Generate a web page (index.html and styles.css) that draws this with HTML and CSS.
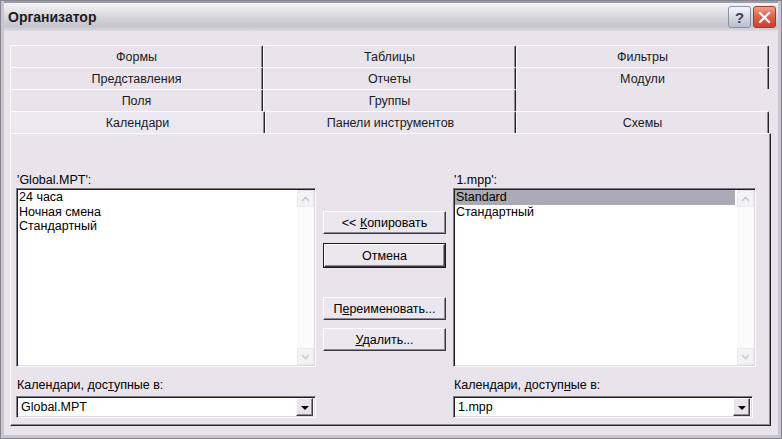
FILE: index.html
```html
<!DOCTYPE html>
<html lang="ru">
<head>
    <meta charset="UTF-8">
    <title>Организатор</title>
    <link rel="stylesheet" href="styles.css">
</head>
<body>
    <div class="window">
        <div class="titlebar">
            <span class="title">Организатор</span>
            <div class="caption-buttons">
                <span class="cap-btn help">?</span>
                <span class="cap-btn close">
                    <svg width="13" height="13" viewBox="0 0 13 13"><path d="M2 2 L11 11 M11 2 L2 11" stroke="#fff" stroke-width="2.2" stroke-linecap="round"/></svg>
                </span>
            </div>
        </div>

        <div class="client">
            <!-- Tab strip: four rows, the front row sits on the panel -->
            <div class="tabs">
                <div class="tab-row">
                    <div class="tab">Формы</div>
                    <div class="tab">Таблицы</div>
                    <div class="tab">Фильтры</div>
                </div>
                <div class="tab-row">
                    <div class="tab">Представления</div>
                    <div class="tab">Отчеты</div>
                    <div class="tab">Модули</div>
                </div>
                <div class="tab-row">
                    <div class="tab">Поля</div>
                    <div class="tab">Группы</div>
                    <div class="tab-empty"></div>
                </div>
                <div class="tab-row front">
                    <div class="tab selected">Календари</div>
                    <div class="tab">Панели инструментов</div>
                    <div class="tab">Схемы</div>
                </div>
            </div>

            <div class="panel">
                <div class="column">
                    <div class="caption">'Global.MPT':</div>
                    <div class="listbox">
                        <div class="items">
                            <div class="item">24 часа</div>
                            <div class="item">Ночная смена</div>
                            <div class="item">Стандартный</div>
                        </div>
                        <div class="scrollbar">
                            <span class="arrow"><svg width="9" height="6" viewBox="0 0 9 6"><path d="M1 5 L4.5 1.5 L8 5" fill="none" stroke="#c9c6cf" stroke-width="1.4"/></svg></span>
                            <span class="arrow"><svg width="9" height="6" viewBox="0 0 9 6"><path d="M1 1 L4.5 4.5 L8 1" fill="none" stroke="#c9c6cf" stroke-width="1.4"/></svg></span>
                        </div>
                    </div>
                    <div class="caption bottom-caption">Календари, дос<u>т</u>упные в:</div>
                    <div class="combo">
                        <span class="combo-text">Global.MPT</span>
                        <span class="drop"><span class="triangle"></span></span>
                    </div>
                </div>

                <div class="actions">
                    <button class="btn copy">&lt;&lt; <u>К</u>опировать</button>
                    <button class="btn default">Отмена</button>
                    <button class="btn rename">П<u>е</u>реименовать...</button>
                    <button class="btn delete"><u>У</u>далить...</button>
                </div>

                <div class="column">
                    <div class="caption">'1.mpp':</div>
                    <div class="listbox">
                        <div class="items">
                            <div class="item active">Standard</div>
                            <div class="item">Стандартный</div>
                        </div>
                        <div class="scrollbar">
                            <span class="arrow"><svg width="9" height="6" viewBox="0 0 9 6"><path d="M1 5 L4.5 1.5 L8 5" fill="none" stroke="#c9c6cf" stroke-width="1.4"/></svg></span>
                            <span class="arrow"><svg width="9" height="6" viewBox="0 0 9 6"><path d="M1 1 L4.5 4.5 L8 1" fill="none" stroke="#c9c6cf" stroke-width="1.4"/></svg></span>
                        </div>
                    </div>
                    <div class="caption bottom-caption">Календари, доступ<u>н</u>ые в:</div>
                    <div class="combo narrow">
                        <span class="combo-text">1.mpp</span>
                        <span class="drop"><span class="triangle"></span></span>
                    </div>
                </div>
            </div>
        </div>
    </div>
</body>
</html>
```

FILE: styles.css
```css
* {
    box-sizing: border-box;
}

body {
    margin: 0;
    background: #ffffff;
    font-family: "Liberation Sans", Arial, sans-serif;
    font-size: 12.5px;
    color: #000000;
}

/* Outer window frame */
.window {
    width: 782px;
    height: 439px;
    border: 1px solid #86848f;
    padding: 0 3px 3px 3px;
    background: #c9c6d0;
    display: flex;
    flex-direction: column;
}

/* Title bar */
.titlebar {
    height: 30px;
    display: flex;
    align-items: center;
    justify-content: space-between;
    padding: 0 2px 0 4px;
    border-top: 2px solid #9e9ca8;
    background: linear-gradient(to bottom, #f3f3f6 0%, #e6e5ea 25%, #cfcdd5 65%, #c6c4cc 85%, #dedce2 100%);
}

.title {
    font-size: 14px;
    font-weight: bold;
    color: #1c1b20;
}

.caption-buttons {
    display: flex;
    gap: 2px;
}

.cap-btn {
    width: 23px;
    height: 22px;
    border-radius: 3px;
    display: flex;
    align-items: center;
    justify-content: center;
}

.help {
    border: 1px solid #8a90a6;
    background: linear-gradient(to bottom, #f4f5fa 0%, #d6d9e4 55%, #b9bdcc 100%);
    color: #3b4266;
    font-weight: bold;
    font-size: 15px;
}

.close {
    border: 1px solid #a83a2c;
    background: linear-gradient(to bottom, #f0a08c 0%, #e0644e 45%, #c8412f 100%);
}

/* Client area */
.client {
    flex: 1;
    background: #e9e4ec;
    padding: 14px 7px 0 6px;
}

.tabs {
    margin-right: 2px;
}

.tab-row {
    display: grid;
    grid-template-columns: 253px 253px 253px;
    height: 22px;
}

.tab-row.front {
    grid-template-columns: 255px 251px 253px;
}

.tab {
    display: flex;
    align-items: center;
    justify-content: center;
    border-top: 1px solid #ffffff;
    border-left: 1px solid #ffffff;
    border-right: 1px solid #242328;
    box-shadow: inset -1px 0 #8d8a95;
    border-radius: 2px 2px 0 0;
    color: #1a1a1e;
}

.tab.selected {
    background: #ece8ef;
}

/* Tab page */
.panel {
    height: 293px;
    border-top: 1px solid #ffffff;
    border-left: 1px solid #ffffff;
    border-right: 1px solid #242328;
    border-bottom: 1px solid #242328;
    box-shadow: inset -1px -1px #8d8a95;
    padding: 39px 0 0 5px;
    display: grid;
    grid-template-columns: 300px 123px 303px;
    column-gap: 7px;
    align-items: start;
}

.column {
    display: flex;
    flex-direction: column;
}

.caption {
    height: 15px;
    line-height: 15px;
    padding-left: 1px;
}

.bottom-caption {
    margin-top: 11px;
    margin-bottom: 3px;
}

/* List boxes */
.listbox {
    height: 179px;
    display: flex;
    background: #ffffff;
    border: 1px solid;
    border-color: #7d7a86 #ffffff #ffffff #7d7a86;
    box-shadow: inset 1px 1px #1f1e22, inset -1px -1px #dcd8e0;
    padding: 1px;
}

.items {
    flex: 1;
    padding-right: 2px;
}

.item {
    height: 14.5px;
    line-height: 14.5px;
    padding-left: 1px;
    white-space: nowrap;
}

.item.active {
    background: #aaa9b4;
}

.scrollbar {
    width: 17px;
    display: flex;
    flex-direction: column;
    justify-content: space-between;
    background: #fbfbfc;
}

.arrow {
    height: 17px;
    display: flex;
    align-items: center;
    justify-content: center;
    background: #f3f2f5;
    border: 1px solid #ebe9ee;
}

/* Combo boxes */
.combo {
    height: 22px;
    display: flex;
    align-items: center;
    background: #ffffff;
    border: 1px solid;
    border-color: #7d7a86 #ffffff #ffffff #7d7a86;
    box-shadow: inset 1px 1px #1f1e22, inset -1px -1px #dcd8e0;
    padding: 2px 2px 2px 4px;
}

.combo.narrow {
    width: 300px;
}

.combo-text {
    flex: 1;
}

.drop {
    width: 17px;
    height: 18px;
    display: flex;
    align-items: center;
    justify-content: center;
    background: #e9e4ec;
    border: 1px solid;
    border-color: #ffffff #3a3940 #3a3940 #ffffff;
    box-shadow: inset -1px -1px #8d8a95;
}

.triangle {
    width: 0;
    height: 0;
    border-left: 4px solid transparent;
    border-right: 4px solid transparent;
    border-top: 4px solid #000000;
    margin-top: 1px;
}

/* Command buttons */
.actions {
    display: flex;
    flex-direction: column;
    padding-top: 38px;
}

.btn {
    height: 23px;
    font-family: inherit;
    font-size: 12.5px;
    color: #000000;
    background: #ebe7ee;
    border: 1px solid;
    border-color: #ffffff #3a3940 #3a3940 #ffffff;
    box-shadow: inset -1px -1px #8d8a95;
    padding: 0;
}

.btn.default {
    height: 25px;
    margin-top: 9px;
    outline: 1px solid #1a1a1e;
    outline-offset: -1px;
    border-width: 2px;
}

.btn.rename {
    margin-top: 29px;
}

.btn.delete {
    margin-top: 8px;
}
```
